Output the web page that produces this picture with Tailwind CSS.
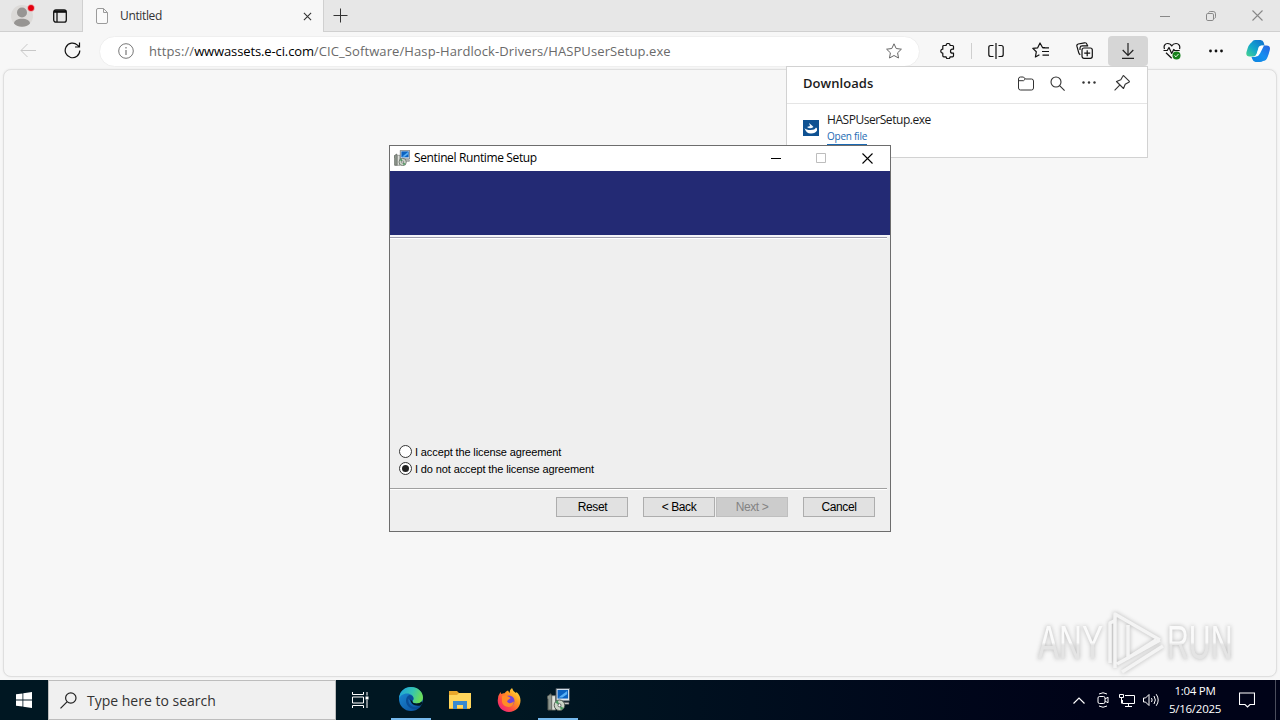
<!DOCTYPE html>
<html lang="en">
<head>
  <meta charset="UTF-8">
  <meta name="viewport" content="width=device-width, initial-scale=1.0">
  <title>Untitled</title>
  <script src="https://cdn.jsdelivr.net/npm/@tailwindcss/browser@4"></script>
</head>
<body class="relative flex h-[720px] w-[1280px] flex-col overflow-hidden bg-[#f7f7f7] font-['Open_Sans',sans-serif] text-[#1b1b1b]">

  <!-- Shared icons -->
  <svg class="hidden">
    <symbol id="installer" viewBox="0 0 24 24">
      <path d="M0 9l4-3 1 3v14H1V12z" fill="#8f978f" stroke="#50564f"/>
      <path d="M5 8h4v15H5z" fill="#dfe2dc" stroke="#6b7069" stroke-width=".8"/>
      <path d="M9.500.5h14v13h-14z" fill="#e3e8ec" stroke="#48545c"/>
      <path d="M11 2h11v9H11z" fill="#0b62c0"/>
      <path d="M12 10l9-7v3.500L16 10z" fill="#58b0f5"/>
      <path d="M13 15h10v2H13z" fill="#d7d7d7" stroke="#444" stroke-width=".6"/>
      <circle cx="13" cy="18" r="5.500" fill="#cbd5c8" stroke="#4f584e"/>
      <path d="M13 18L8.500 15l2.500-2.500zM13 18l4.500 3-3 2z" fill="#4d9a62"/>
      <circle cx="13" cy="18" r="1.600" fill="#fff" stroke="#444" stroke-width=".8"/>
    </symbol>
  </svg>

  <!-- Tab strip -->
  <header class="flex h-8 shrink-0 items-stretch bg-[#e7e7e7]">
    <div class="flex w-[83px] items-center border-r border-b border-[#d0d0d0] pl-[10px]">
      <svg class="size-[26px]" viewBox="0 0 26 26">
        <circle cx="12" cy="13" r="11" fill="#dcdad8"/>
        <circle cx="12" cy="9.500" r="5" fill="#979593"/>
        <path d="M4 20.500c0-3 3.500-4.700 8-4.700s8 1.700 8 4.700c-2 2.300-5 3.300-8 3.300s-6-1-8-3.300z" fill="#979593"/>
        <circle cx="21" cy="5" r="3.500" fill="#e4000f" stroke="#ececec" stroke-width=".6"/>
      </svg>
      <svg class="ml-[17px] size-[14px]" viewBox="0 0 14 14" fill="none" stroke="#111" stroke-width="1.300">
        <rect x=".7" y=".9" width="12.600" height="12.200" rx="2.200"/>
        <path d="M1 2.500h12" stroke-width="2.600"/><path d="M4 3v10"/>
      </svg>
    </div>
    <div class="flex w-[241px] items-center border-r border-[#d0d0d0] bg-[#f7f7f7] pr-[11px] pl-[13px]">
      <svg class="h-4 w-3" viewBox="0 0 12 16" fill="#fafafa" stroke="#9b9b9b"><path d="M.5 2q0-1.500 1.500-1.500h5.500l4 4V14q0 1.500-1.500 1.500H2Q.5 15.500.5 14zM7.500.5v4h4"/></svg>
      <span class="ml-3 flex-1 text-[12px] tracking-[-0.35px] text-[#333]">Untitled</span>
      <svg class="size-[9px]" viewBox="0 0 10 10" stroke="#333" stroke-width="1.200"><path d="M1 1l8 8M9 1L1 9"/></svg>
    </div>
    <div class="flex flex-1 items-center border-b border-[#d0d0d0] pr-[17px] pl-[9px]">
      <svg class="size-[15px]" viewBox="0 0 15 15" stroke="#333"><path d="M7.500.500v14M.500 7.500h14"/></svg>
      <div class="flex-1"></div>
      <svg class="size-[10px]" viewBox="0 0 10 10" stroke="#888"><path d="M0 5.500h10"/></svg>
      <svg class="ml-[36px] size-[10px]" viewBox="0 0 10 10" fill="none" stroke="#888"><rect x=".5" y="2.500" width="7" height="7" rx="1.300"/><path d="M2.500 1.500Q3 .5 4.200.5h3q2.300 0 2.300 2.300v3q0 1.200-1 1.700"/></svg>
      <svg class="ml-[36px] size-[11px]" viewBox="0 0 11 11" stroke="#888" stroke-width="1.100"><path d="M.5.5l10 10M10.500.5l-10 10"/></svg>
    </div>
  </header>

  <!-- Toolbar -->
  <nav class="flex h-9 shrink-0 items-center bg-[#f7f7f7]">
    <div class="flex w-14 items-center justify-center pt-[2px]">
      <svg class="size-4" viewBox="0 0 16 16" fill="none" stroke="#c8c8c8"><path d="M16 7.500H1M7.500 1L1 7.500 7.500 14"/></svg>
    </div>
    <div class="flex w-8 items-center justify-center pt-px">
      <svg class="size-[17px]" viewBox="0 0 17 17" fill="none" stroke="#111" stroke-width="1.200"><path d="M15.800 8.500A7.300 7.300 0 1 1 13.500 3.100L15.500 5M15.500.5V5H11"/></svg>
    </div>
    <div class="mt-[3px] ml-[11px] flex h-[31px] w-[821px] items-center rounded-full border border-[#efefef] bg-white pr-[17px] pl-[18px]">
      <svg class="mb-px size-4" viewBox="0 0 16 16" fill="none" stroke="#777"><circle cx="8" cy="8" r="7.300"/><path d="M8 7v5M8 4v1.500" stroke-width="1.200"/></svg>
      <p class="ml-[15px] flex-1 text-[13px] whitespace-nowrap text-[#6a6a6a] tracking-[0.1px]">https://<span class="tracking-[-0.12px] text-black">wwwassets.e-ci.com</span>/CIC_Software/Hasp-Hardlock-Drivers/HASPUserSetup.exe</p>
      <svg class="mb-px size-4" viewBox="0 0 16 16" fill="none" stroke="#666" stroke-linejoin="round"><path d="M8 .8l2.200 4.700 5.200.7-3.800 3.600.9 5.200L8 12.500 3.500 15l.9-5.200L.6 6.200l5.200-.7z"/></svg>
    </div>
    <div class="mt-px ml-2 flex items-center gap-1">
      <div class="flex w-10 justify-center">
        <svg class="size-4" viewBox="0 0 16 16" fill="none" stroke="#111" stroke-width="1.200" stroke-linejoin="round"><path d="M3.800 2.500h2.300a2 2 0 0 1 4 0h2.400q1 0 1 1v2.700h-1a2 2 0 0 0 0 4h1v2.600q0 1-1 1h-2.400a2 2 0 0 1-4 0H3.800q-1 0-1-1v-2.600a2 2 0 0 1 0-4V3.500q0-1 1-1z"/></svg>
      </div>
      <div class="-ml-[1px] h-4 w-px bg-[#cfcfcf]"></div>
      <div class="flex w-10 justify-center">
        <svg class="size-4" viewBox="0 0 16 16" fill="none" stroke="#111" stroke-width="1.200"><path d="M8 0v16M5.500 2.500H2.800Q.8 2.500.8 4.500v7q0 2 2 2h2.700M10.500 2.500h2.700q2 0 2 2v7q0 2-2 2h-2.700"/></svg>
      </div>
      <div class="flex w-10 justify-center">
        <svg class="size-[17px]" viewBox="0 0 17 17" fill="none" stroke="#111" stroke-width="1.200" stroke-linejoin="round"><path d="M13 5.500h-2.500L8 1 5.700 5.800.8 6.400l3.500 3.400-.9 5.200 4-2.300M10.500 5.800H17M10 9.500h7M10.500 13.200H17"/></svg>
      </div>
      <div class="flex w-10 justify-center">
        <svg class="size-[17px]" viewBox="0 0 17 17" fill="none" stroke="#111" stroke-width="1.200"><rect x="6" y="6" width="10.300" height="10.300" rx="2"/><path d="M11.200 8.300v6M8.200 11.200h6M4.300 12.800Q3 12 2.700 10.600L.9 4.200Q.5 2.500 2.200 2L8.500.8q1.900-.3 2.500 1.600l.5 1.800M4 8V5.800q.3-1.900 2.200-1.900h6"/></svg>
      </div>
      <div class="flex h-[30px] w-10 items-center justify-center rounded-[4px] bg-[#d6d6d6]">
        <svg class="h-4 w-[14px]" viewBox="0 0 14 16" fill="none" stroke="#222" stroke-width="1.200"><path d="M7 0v12M1.700 7L7 12.300 12.300 7M1 15.300h12"/></svg>
      </div>
      <div class="flex w-10 justify-center">
        <svg class="size-[18px]" viewBox="0 0 18 18" fill="none" stroke="#111" stroke-width="1.200" stroke-linejoin="round"><path d="M1.500 7C.3 4 2 1.500 4.600 1.500 6.500 1.500 8 2.500 8.700 4 9.500 2.500 11 1.500 13 1.500c2.800 0 4.500 2.500 3.500 5.500M.5 8.500h3.700L6 5.500l2.700 6 2-4 1 1h5M3 10.700l5.700 5.500"/><circle cx="13.500" cy="13.500" r="4" fill="#15801b" stroke="none"/><path d="M11.500 13.500l1.500 1.300 2.500-2.800" stroke="#fff" stroke-width=".9"/></svg>
      </div>
      <div class="flex w-10 justify-center">
        <svg class="h-4 w-[14px]" viewBox="0 0 14 16" fill="#111"><circle cx="1.500" cy="8" r="1.400"/><circle cx="7" cy="8" r="1.400"/><circle cx="12.500" cy="8" r="1.400"/></svg>
      </div>
      <svg class="ml-[6px] size-6" viewBox="0 0 24 24">
        <defs>
          <linearGradient id="cpA" x1="0" y1="1" x2="1" y2="0"><stop stop-color="#48d58c"/><stop offset=".45" stop-color="#12a6cc"/><stop offset="1" stop-color="#116bd0"/></linearGradient>
          <linearGradient id="cpB" x1="0" y1="1" x2="1" y2="0"><stop stop-color="#0c85de"/><stop offset=".5" stop-color="#168ff0"/><stop offset="1" stop-color="#285fe0"/></linearGradient>
        </defs>
        <path d="M17 22q-1 1-3 1H9.500Q7 22.500 6.300 20L5.500 18h2.800q2 0 2.700-2l2-6.500Q14 6.500 17 6.500h3.500q4.300 0 3.300 4.500-2 8-4 10-1.300 1-2.800 1z" fill="url(#cpB)"/>
        <path d="M6 3Q7 1 9 1h5.500q2.500 0 3.200 2.500l.8 3h-2.800q-2 0-2.700 2l-2 6.500Q10 17.500 7 17.500H3.500Q-.5 17.500.5 13 2.500 5 6 3z" fill="url(#cpA)"/>
        <path d="M12.700 8q.8-1.500 3.300-1.500h2L14 14.500q-1.500 3-4 3H7.500q2 0 3-2.500z" fill="#fff"/>
      </svg>
    </div>
  </nav>

  <!-- Page area -->
  <main class="flex flex-1 px-[3px] pt-[1px] pb-[3px]">
    <div class="flex-1 rounded-lg border border-[#dfdfdf] bg-[#f7f7f7] shadow-[0_0_2px_#e4e4e4]"></div>
  </main>

  <!-- Downloads flyout -->
  <aside class="absolute top-[66px] left-[786px] h-[92px] w-[362px] border border-[#d2d2d2] bg-white">
    <div class="flex h-[37px] items-center border-b border-[#e5e5e5] pr-[17px] pb-[4px] pl-4">
      <h2 class="flex-1 pt-px text-[13px] font-semibold tracking-[0.05px]">Downloads</h2>
      <svg class="h-[15px] w-4" viewBox="0 0 16 15" fill="none" stroke="#333"><path d="M.5 3Q.5 1 2.500 1h3L7.300 3h6.200q2 0 2 2v7q0 2-2 2h-11q-2 0-2-2zM.5 4.700h5L7.300 3"/></svg>
      <svg class="ml-4 size-[15px]" viewBox="0 0 15 15" fill="none" stroke="#333" stroke-width="1.100"><circle cx="6" cy="6" r="5"/><path d="M9.600 9.600l5 5"/></svg>
      <svg class="mb-[3px] ml-[17px] h-4 w-[14px]" viewBox="0 0 14 16" fill="#333"><circle cx="1.500" cy="8.500" r="1.200"/><circle cx="7" cy="8.500" r="1.200"/><circle cx="12.500" cy="8.500" r="1.200"/></svg>
      <svg class="mb-[1px] ml-[18px] size-4" viewBox="0 0 16 16" fill="none" stroke="#333" stroke-width="1.100" stroke-linejoin="round"><path d="M9.800.8l5.400 5.300q.5.700-.4 1.100l-3.600 2-1.700 4.300L2.500 6.500l4.300-1.700 2-3.600q.4-.8 1-.4zM5.700 10.200L.6 15.400"/></svg>
    </div>
    <div class="flex gap-2 pt-2 pl-4">
      <svg class="mt-2 size-4" viewBox="0 0 16 16"><path fill="#0e5192" d="M0 0h16v16H0z"/><path d="M1.500 8q1.500 2 6 2 4.500 0 5.500-2.500 1.500.500 1 3-1.500 3-6 3-5 0-6.500-5.500z" fill="#fff"/><path d="M4 7q3 2.500 6.500 0L9 5.500 6 3l1 3z" fill="#eef6fd"/></svg>
      <div>
        <p class="text-[12px] leading-4 tracking-[-0.45px]">HASPUserSetup.exe</p>
        <p class="mt-[1px] w-fit border-b border-[#1a69b3] text-[10px] leading-[15px] tracking-[-0.25px] text-[#1a69b3]">Open file</p>
      </div>
    </div>
  </aside>

  <!-- Setup dialog -->
  <section class="absolute top-[145px] left-[389px] flex h-[387px] w-[502px] flex-col border border-[#6d6d6d] bg-[#efefef] text-black">
    <div class="flex h-[25px] shrink-0 items-center bg-white pr-[17px] pb-px pl-[4px]">
      <svg class="size-4"><use href="#installer"/></svg>
      <h1 class="ml-1 flex-1 text-[12px] font-normal tracking-[-0.37px]">Sentinel Runtime Setup</h1>
      <svg class="h-[11px] w-[10px]" viewBox="0 0 10 11" stroke="#000"><path d="M0 5.500h10"/></svg>
      <svg class="ml-[35px] size-[10px]" viewBox="0 0 10 10" fill="none" stroke="#bdbdbd"><path d="M.5.5h9v9h-9z"/></svg>
      <svg class="ml-[36px] size-[11px]" viewBox="0 0 11 11" stroke="#000" stroke-width="1.100"><path d="M.5.5l10 10M10.500.5l-10 10"/></svg>
    </div>
    <div class="h-16 shrink-0 bg-[#232a74]"></div>
    <div class="h-[2px] shrink-0 bg-[#f4f4f8]"></div>
    <div class="mr-[3px] h-[2px] border-t border-[#9c9cac] bg-white"></div>
    <form class="flex flex-1 flex-col justify-end pb-[11px] pl-[9px] font-['Liberation_Sans',sans-serif] text-[11px] tracking-[-0.12px]">
      <label class="flex h-[17px] items-center gap-[3px]">
        <svg class="size-[13px]" viewBox="0 0 13 13"><circle cx="6.500" cy="6.500" r="6" fill="#fff" stroke="#333"/></svg>
        <span class="pt-[2px]">I accept the license agreement</span>
      </label>
      <label class="flex h-[17px] items-center gap-[3px]">
        <svg class="size-[13px]" viewBox="0 0 13 13"><circle cx="6.500" cy="6.500" r="6" fill="#fff" stroke="#333"/><circle cx="6.500" cy="6.500" r="3.500" fill="#222"/></svg>
        <span class="pt-[2px]">I do not accept the license agreement</span>
      </label>
    </form>
    <div class="mr-[3px] h-[2px] border-t border-[#a0a0a0] bg-white"></div>
    <div class="flex h-[41px] items-start justify-end pt-[7px] pr-[15px] font-['Liberation_Sans',sans-serif] text-[12px] tracking-[-0.4px]">
      <button class="h-5 w-[72px] border border-[#adadad] bg-[#e1e1e1]"><span class="block pl-px leading-[18px]">Reset</span></button>
      <button class="ml-[15px] h-5 w-[72px] border border-[#adadad] bg-[#e1e1e1]"><span class="block leading-[18px]">&lt; Back</span></button>
      <button class="ml-[1px] h-5 w-[72px] border border-[#bfbfbf] bg-[#cccccc] text-[#838383]"><span class="block leading-[18px]">Next &gt;</span></button>
      <button class="ml-[15px] h-5 w-[72px] border border-[#adadad] bg-[#e1e1e1]"><span class="block leading-[18px]">Cancel</span></button>
    </div>
  </section>

  <!-- Watermark -->
  <div class="absolute top-[606px] left-[1030px] h-[70px] w-[230px]">
    <svg class="h-[70px] w-[230px] overflow-visible drop-shadow-[0_0_2px_#b5b5b5]" viewBox="0 0 230 70">
      <defs><linearGradient id="wm" x1="0" y1="0" x2="0" y2="1"><stop offset=".5" stop-color="#fafafa"/><stop offset=".55" stop-color="#e4e4e4"/></linearGradient></defs>
      <g fill="url(#wm)" font-family="Liberation Sans Narrow, Liberation Sans" font-size="48">
        <text transform="translate(8 53) scale(.66 1)">ANY</text>
        <text transform="translate(137 53) scale(.63 1)">RUN</text>
      </g>
      <path d="M80 57V17l6-3M85 62V8l45 26M98 19v33l28-18M87 58l43-24M92 66l41-26" fill="none" stroke="#f4f4f4" stroke-width="3.500" stroke-linejoin="round"/>
    </svg>
  </div>

  <!-- Taskbar -->
  <footer class="flex h-10 shrink-0 bg-linear-to-r from-[#001722] from-40% to-[#000318] to-85% text-white">
    <div class="flex w-12 items-center justify-center">
      <svg class="size-4" viewBox="0 0 16 16" fill="#fff"><path d="M0 2.300L6.500 1.400v6.100H0zM7.300 1.300L16 0v7.500H7.300zM0 8.400h6.500v6.200L0 13.700zM7.300 8.400H16V16l-8.700-1.300z"/></svg>
    </div>
    <div class="flex w-[288px] items-center border border-[#bdbdbd] bg-[#f0f0f0] pl-[11px] text-[#333]">
      <svg class="size-[17px]" viewBox="0 0 17 17" fill="none" stroke="#222" stroke-width="1.200"><circle cx="10.800" cy="6" r="5.200"/><path d="M7 9.800L.5 16.300"/></svg>
      <span class="ml-[10px] text-[14px]">Type here to search</span>
    </div>
    <div class="flex w-12 items-center justify-center">
      <svg class="h-4 w-[17px]" viewBox="0 0 17 16" fill="none" stroke="#fff"><path d="M.5 0v2.500h11V0M.5 5h11v6H.5zM.5 16v-2.500h11V16M15 0v3.500M15 8v8"/><path d="M13.500 4.500h3v3h-3z" fill="#fff" stroke="none"/></svg>
    </div>
    <div class="flex w-[54px] items-center justify-center">
      <div class="flex h-10 w-10 items-center justify-center border-b-2 border-[#76b9ed]">
        <svg class="size-6" viewBox="0 0 24 24">
          <defs>
            <linearGradient id="edA" x1="0" y1="0" x2="1" y2=".3"><stop stop-color="#1b9ee2"/><stop offset=".6" stop-color="#35c4b1"/><stop offset="1" stop-color="#69dc5c"/></linearGradient>
            <linearGradient id="edB" x1="0" y1="0" x2="1" y2="1"><stop stop-color="#1b8fd9"/><stop offset="1" stop-color="#0b4a98"/></linearGradient>
          </defs>
          <circle cx="12" cy="12" r="12" fill="url(#edB)"/>
          <path d="M0 11.500C.5 4.500 5.500 0 12 0c7 0 12 5 12 10.500 0 4-3 6-6.500 6-2.500 0-4-1-4-2 0-.8 1-1.300 1-3 0-2.500-2.500-5-6.500-5-4 0-7 2.500-8 5z" fill="url(#edA)"/>
          <path d="M9.500 11.500c-1 6 3.500 9.500 8.500 8.500 2-.3 3.300-1.200 4-1.800-.7 1-1.800 2.700-4 4-5 .8-11-3-11-8.500 0-3 1.500-5 3.500-5.700 2 0 4 1.500 4 3.500 0 1.300-1 2-1 3-.8 0-3-.8-4-3z" fill="#094d97"/>
          <path d="M13.500 14.500c0 1 1.500 2 4 2 2 0 4-.7 5.300-2l.7 1.500-1.500 2.200C17 20 11 17 11.500 12.500z" fill="#001722"/>
        </svg>
      </div>
    </div>
    <div class="flex w-[44px] items-center justify-center">
      <svg class="h-[20px] w-[22px]" viewBox="0 0 22 20"><path d="M0 1h8l2 2h11v16H0z" fill="#e9a82b"/><path d="M0 5h8l2-2h12v15H0z" fill="#ffd65c"/><path d="M4 19v-8h14v8h-4v-4H8v4z" fill="#3889cf"/></svg>
    </div>
    <div class="flex w-[54px] items-center justify-center">
      <svg class="size-6" viewBox="0 0 24 24">
        <defs><linearGradient id="ff" x1="1" y1="0" x2=".1" y2="1"><stop stop-color="#fff04a"/><stop offset=".4" stop-color="#ff9820"/><stop offset=".7" stop-color="#ff4a45"/><stop offset="1" stop-color="#e9188b"/></linearGradient></defs>
        <path d="M3.500 4q.2 1.500 1 2Q6 5 7.500 5.300 9 3 11 2.500L12.500 5Q12.500 1.500 15 0q1 3.500 4 5l.5-1q4 3.500 4 8.500c0 6.500-5 11.500-11.500 11.500S.7 19 .7 12.500Q.7 7.500 3.500 4z" fill="url(#ff)"/>
        <circle cx="12" cy="13" r="5.500" fill="#7344d8"/><path d="M5 8q3-1.500 6 .5 2 .5 2.500 2-3 1-3.500 3 2 3.500 7 0Q16 19 11.500 19 6 18.500 5 14z" fill="#ff8c26"/>
      </svg>
    </div>
    <div class="flex w-[44px] items-center justify-center">
      <div class="flex h-10 w-10 items-center justify-center border-b-2 border-[#76b9ed]"><svg class="size-[23px]"><use href="#installer"/></svg></div>
    </div>
    <div class="flex flex-1 items-center justify-end">
      <svg class="h-[7px] w-3" viewBox="0 0 12 7" fill="none" stroke="#fff" stroke-width="1.200"><path d="M.5 6.500L6 1l5.500 5.500"/></svg>
      <svg class="ml-3 h-4 w-3" viewBox="0 0 12 16" fill="none" stroke="#fff"><rect x="1" y="4.500" width="7" height="7" rx="1.500"/><path d="M8 7l3-1.800v5.600L8 9M2 2q4-2.500 8 0M2 14q4 2.500 8 0"/></svg>
      <svg class="ml-[10px] h-[15px] w-4" viewBox="0 0 16 15" fill="none" stroke="#fff"><path d="M6 2.500h9.500v8H3.500V7M9.500 10.500v3M6 13.500h7M.5 1.500h4v3h-4zM2.500 4.500v6"/></svg>
      <svg class="ml-[8px] h-[14px] w-4" viewBox="0 0 16 14" fill="none" stroke="#fff"><path d="M.5 5h2L6 1.500v11L2.500 9h-2zM8.500 5q1.300 2 0 4M11 3q2.700 4 0 8M13.200 1.200q4 5.800 0 11.600"/></svg>
      <div class="ml-[8px] w-[56px] pb-px text-center text-[11.500px] leading-[18px] tracking-[-0.25px] whitespace-nowrap"><p>1:04 PM</p><p>5/16/2025</p></div>
      <svg class="ml-[16px] size-4" viewBox="0 0 16 16" fill="none" stroke="#fff" stroke-width="1.100"><path d="M.5 1h15v11.500H11L8.500 15 6 12.500H.5z"/></svg>
      <div class="ml-[20px] h-10 w-px bg-[#4a4d5c]"></div>
      <div class="w-1"></div>
    </div>
  </footer>

</body>
</html>
